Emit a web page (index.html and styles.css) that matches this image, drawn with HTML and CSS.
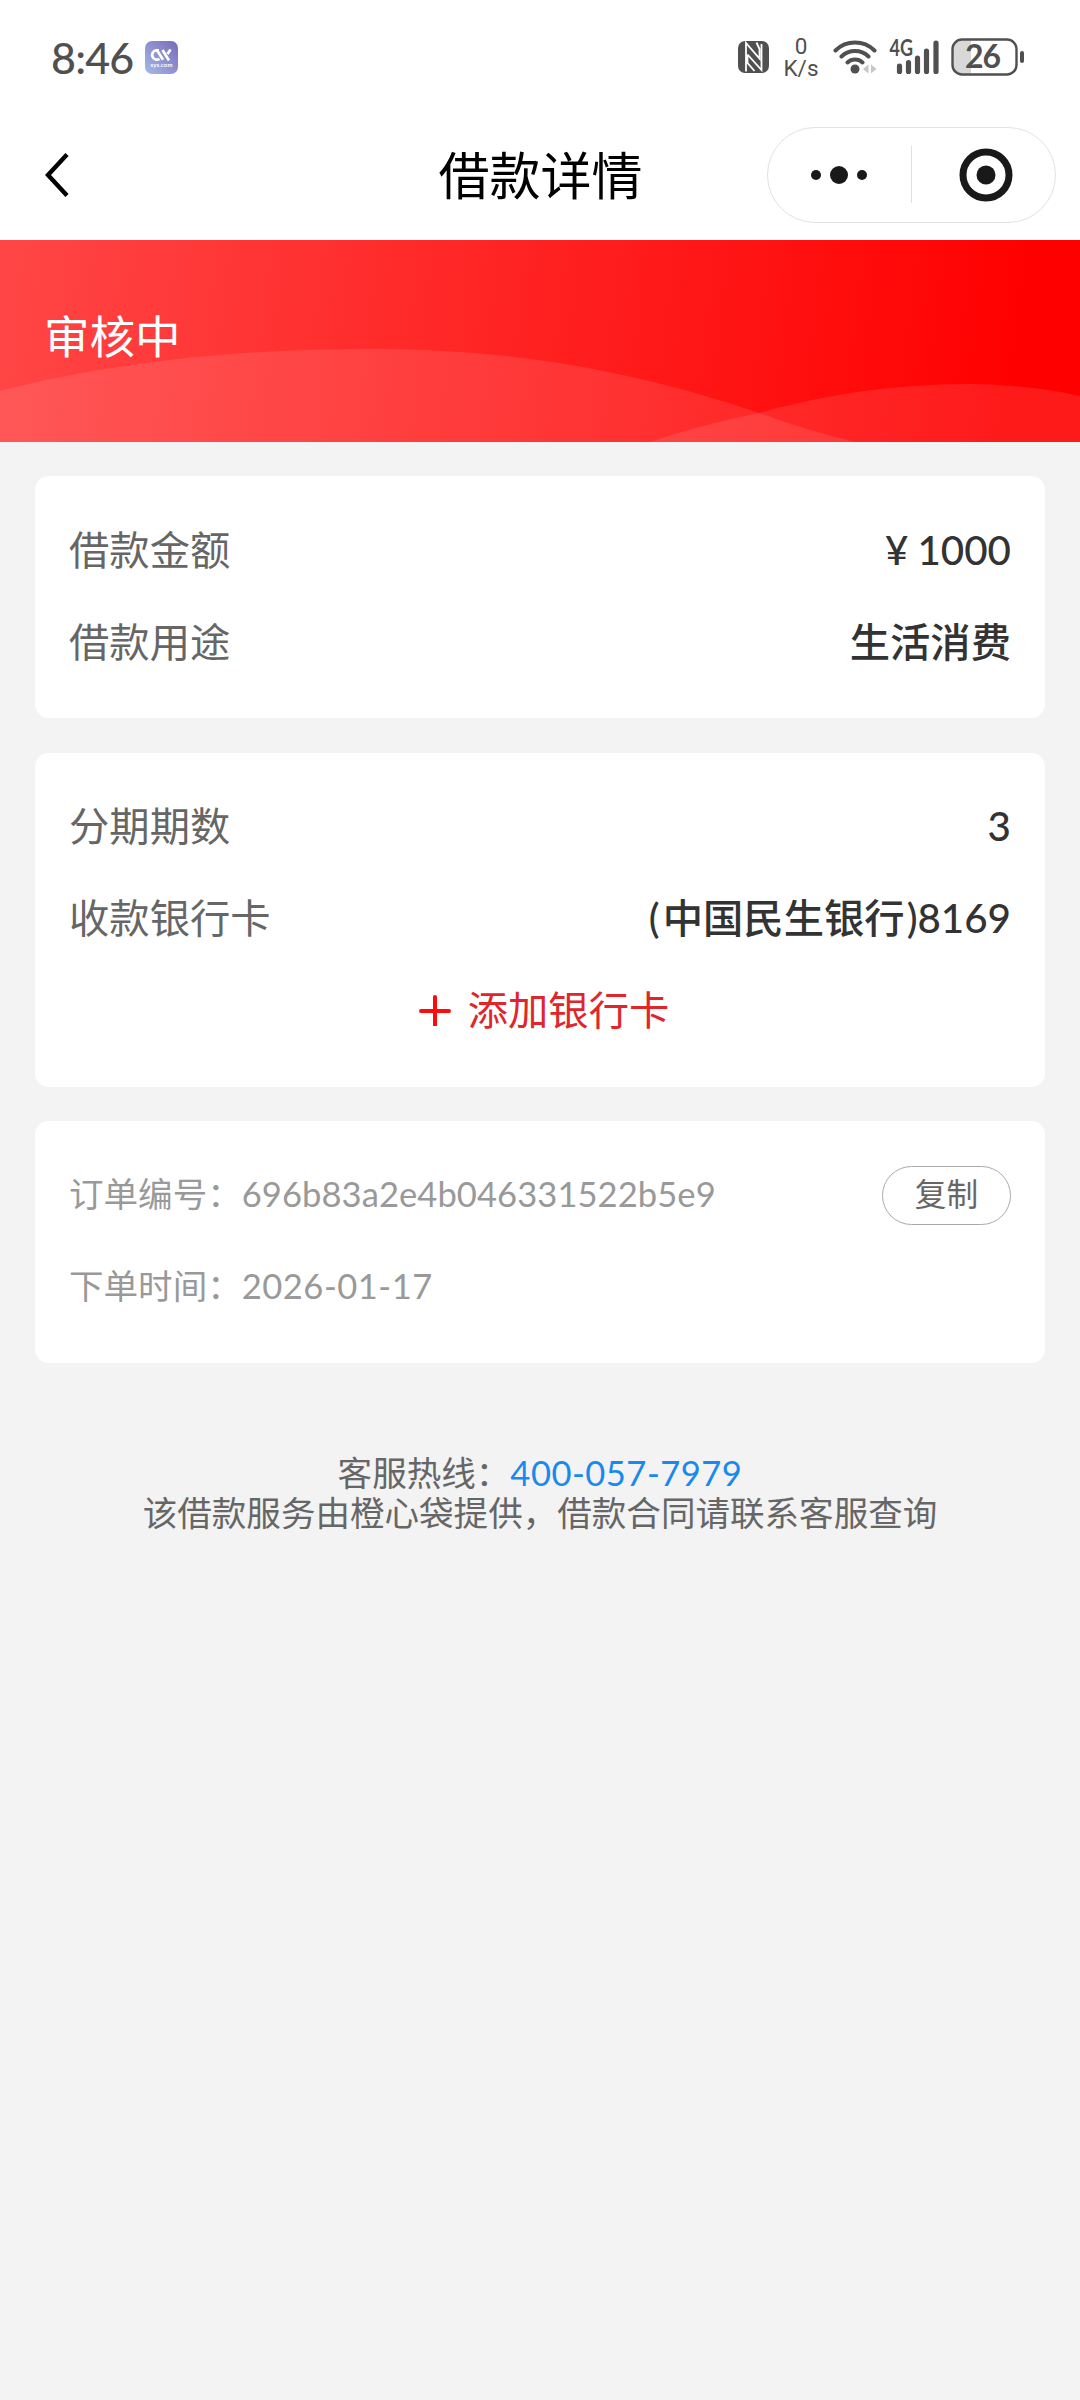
FILE: index.html
```html
<!DOCTYPE html>
<html lang="zh-CN">
<head>
<meta charset="utf-8">
<title>借款详情</title>
<link rel="stylesheet" href="styles.css">
</head>
<body>
<header class="status">
  <div class="status-left">
    <span class="clock">8:46</span>
    <svg class="app" width="33" height="33" viewBox="0 0 33 33">
      <defs><linearGradient id="app-bg" x1="0" y1="1" x2="1" y2="0"><stop offset="0" stop-color="#a4bbe8"/><stop offset="1" stop-color="#7969b8"/></linearGradient></defs>
      <rect width="33" height="33" rx="7" fill="url(#app-bg)"/>
      <path d="M14 9.300H11a4.700 4.700 0 1 0 3.500 8.500M12 9.300l6 9.500M17.500 9l6.500 10.500M25.500 8.500l-3 4.500" fill="none" stroke="#fff" stroke-width="2.700"/>
      <text x="5.500" y="26" textLength="22" font-size="6" font-weight="700" fill="#fff">sys.com</text>
    </svg>
  </div>
  <div class="status-right">
    <svg width="31" height="32" viewBox="0 0 31 32">
      <rect width="31" height="32" rx="7" fill="#505050"/>
      <path d="M8 30.500V2L21.500 17.500V8L18.500 1.500M9.500 13.500l14 15.500V3M9.500 13.500V22l7 8" fill="none" stroke="#fff" stroke-width="1.800"/>
    </svg>
    <div class="speed"><span>0</span><span>K/s</span></div>
    <svg class="wifi" width="44" height="34" viewBox="0 0 44 34">
      <g fill="none" stroke="#505050" stroke-width="4" stroke-linecap="round"><path d="M2.500 10.500a28 28 0 0 1 39 0M8.500 16.500a19.500 19.500 0 0 1 27 0M14.500 22.500a11 11 0 0 1 15 0"/></g>
      <circle cx="22" cy="29" r="4.500" fill="#505050"/>
      <path d="M35.500 24.500v9l-5.500-4.500zM38 24.500v9l5.500-4.500z" fill="#c6c6c6"/>
    </svg>
    <svg class="signal" width="51" height="54" viewBox="0 -10 51 54">
      <text x="0.500" y="16" textLength="23.500" lengthAdjust="spacingAndGlyphs" font-size="22" font-weight="700" fill="#505050">4G</text>
      <path d="M10.500 26v5.500M19.500 22.500v9M28.500 18v13.500M37.500 11v20.500M47 3v28.500" stroke="#505050" stroke-width="5.200" stroke-linecap="round"/>
    </svg>
    <svg class="battery" width="74" height="50" viewBox="0 -6 74 50">
      <path d="M20 2H11a9 9 0 0 0-9 9v16a9 9 0 0 0 9 9h9z" fill="#d8d8d8"/>
      <rect x="1.500" y="1.500" width="64" height="35" rx="9.500" fill="none" stroke="#505050" stroke-width="2.400"/>
      <rect x="69" y="13" width="4" height="12" rx="2" fill="#505050"/>
      <text x="14" y="29.500" textLength="36" font-size="32" font-weight="700" fill="#505050">26</text>
    </svg>
  </div>
</header>
<nav class="nav">
  <svg class="back" width="24" height="46" viewBox="0 0 24 46"><path d="M22 2.500L3 23l19 20.500" fill="none" stroke="#000" stroke-width="4.400"/></svg>
  <h1 class="title">借款详情</h1>
  <div class="capsule">
    <svg width="56" height="18" viewBox="0 0 56 18" fill="#191919"><circle cx="5" cy="9" r="5"/><circle cx="28" cy="9" r="9"/><circle cx="51" cy="9" r="5"/></svg>
    <i class="divider"></i>
    <svg width="54" height="54" viewBox="0 0 54 54"><circle cx="27" cy="27" r="23" fill="none" stroke="#191919" stroke-width="7"/><circle cx="27" cy="27" r="9.500" fill="#191919"/></svg>
  </div>
</nav>
<section class="banner">
  <svg class="waves" width="1080" height="202" viewBox="0 0 1080 202" fill="#fff" fill-opacity=".1">
    <path d="M0 151C110 123 230 109 370 109C520 109 640 133 759 173Q805 190 855 202H0z"/>
    <path d="M650 202Q700 185 759 173C820 156 890 144 970 144Q1030 145 1080 156V202z"/>
  </svg>
  <span class="state">审核中</span>
</section>
<main class="content">
  <section class="card">
    <div class="row"><span class="label">借款金额</span><span class="value"><span class="yen">¥</span>1000</span></div>
    <div class="row"><span class="label">借款用途</span><span class="value">生活消费</span></div>
  </section>
  <section class="card">
    <div class="row"><span class="label">分期期数</span><span class="value">3</span></div>
    <div class="row"><span class="label">收款银行卡</span><span class="value"><span class="open">(</span>中国民生银<span class="close">行</span>)8169</span></div>
    <div class="row add">
      <svg width="32" height="32" viewBox="0 0 32 32"><path d="M16 3v28M2 17h28" stroke="#ff0b0b" stroke-width="4" stroke-linecap="round"/></svg>
      <span>添加银行卡</span>
    </div>
  </section>
  <section class="card meta">
    <div class="row"><span>订单编号：<span class="num">696b83a2e4b046331522b5e9</span></span><button class="copy" type="button">复制</button></div>
    <div class="row"><span>下单时间：<span class="date">2026-01-17</span></span></div>
  </section>
  <footer class="help">
    <p>客服热线：<a class="phone">400-057-7979</a></p>
    <p>该借款服务由橙心袋提供，借款合同请联系客服查询</p>
  </footer>
</main>
</body>
</html>
```
FILE: styles.css
```css
* { box-sizing: border-box; }
body {
  margin: 0;
  min-height: 2400px;
  background: #f3f3f3;
  color: #333;
  font-family: Lato, "Noto Sans CJK SC", sans-serif;
}
svg { display: block; flex: none; }
h1, p { margin: 0; }

.status {
  height: 114px;
  padding: 0 55px 0 51px;
  display: flex;
  justify-content: space-between;
  align-items: center;
  background: #fff;
  color: #505050;
}
.status-left, .status-right { display: flex; align-items: center; }
.clock { padding-top: 1px; font-size: 43px; line-height: 50px; font-weight: 500; width: 94px; white-space: nowrap; letter-spacing: -.8px; }
.speed {
  width: 64px;
  display: flex;
  flex-direction: column;
  align-items: center;
  font: 22.500px/22px Roboto, sans-serif;
}
.signal { margin-left: 12px; }
.battery { margin-left: 11px; }

.nav {
  height: 126px;
  padding: 0 24px 5px 45px;
  display: grid;
  grid-template-columns: 1fr auto 1fr;
  align-items: center;
  background: #fff;
}
.title { padding-top: 2px; font-size: 51px; line-height: 60px; font-weight: 400; color: #000; margin-left: -20px; }
.capsule {
  justify-self: end;
  width: 289px;
  height: 96px;
  border: 1px solid #e2e2e2;
  border-radius: 48px;
  padding: 0 42px 0 43px;
  display: flex;
  align-items: center;
  justify-content: space-between;
}
.divider { width: 1px; height: 57px; background: #e0e0e0; margin-right: 3px; }

.banner {
  position: relative;
  height: 202px;
  padding-left: 44px;
  display: flex;
  align-items: center;
  background: linear-gradient(97deg, #ff4646 0%, #ff0000 94%);
}
.waves { position: absolute; inset: 0; }
.state { position: relative; padding-bottom: 8px; font-size: 45.500px; line-height: 54px; color: #fff; }

.content { padding: 34px 35px; }
.card {
  margin-bottom: 34.500px;
  padding: 28px 34px 30px;
  border-radius: 14px;
  background: #fff;
  font-size: 40.32px;
}
.card + .card { padding: 27px 34px 31px; }
.row { height: 92px; display: flex; align-items: center; justify-content: space-between; line-height: 48px; }
.label { color: #666; }
.value { font-weight: 500; }
.yen { margin-right: 9px; }
.open { margin-right: 3px; }
.close { margin-right: 2px; }
.add { justify-content: center; gap: 17px; padding-left: 8px; color: #e0262a; }
.meta { color: #999; font-size: 34.56px; }
.num { letter-spacing: .07px; }
.copy {
  width: 129px;
  height: 59px;
  margin-top: 3px;
  padding: 0 0 7px;
  border: 1px solid #aaa;
  border-radius: 30px;
  background: #fff;
  color: #666;
  font: 31.68px "Noto Sans CJK SC", sans-serif;
}
.help { padding-top: 55px; text-align: center; color: #666; font-size: 34.56px; line-height: 40px; }
.date, .phone { letter-spacing: .5px; }
.phone { color: #1989ee; }
```
